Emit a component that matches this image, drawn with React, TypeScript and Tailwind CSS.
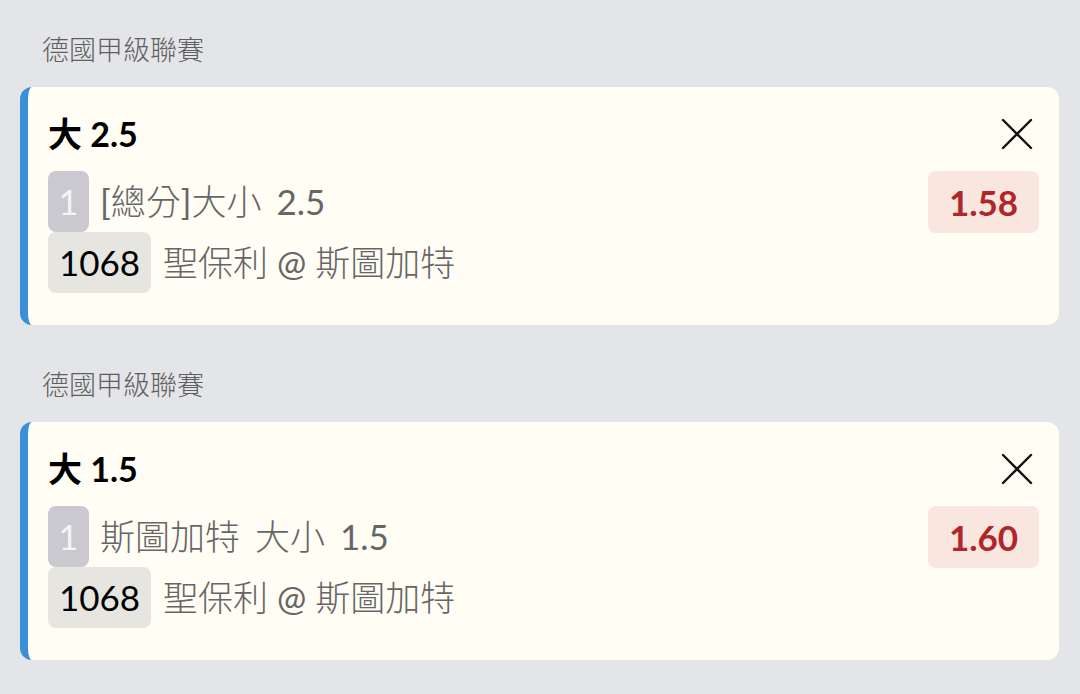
const bets = [
  { league: "德國甲級聯賽", title: "大 2.5", market: "[總分]大小 2.5", odds: "1.58", code: "1068", match: "聖保利 @ 斯圖加特" },
  { league: "德國甲級聯賽", title: "大 1.5", market: "斯圖加特 大小 1.5", odds: "1.60", code: "1068", match: "聖保利 @ 斯圖加特" },
];

// CJK runs use the light weight, latin runs stay regular
function Mixed({ text }: { text: string }) {
  const parts = text.match(/[\u3400-\u9fff]+|[^\u3400-\u9fff]+/g) ?? [];
  return (
    <>
      {parts.map((p, i) =>
        /[\u3400-\u9fff]/.test(p) ? (
          <span key={i} className="font-light">{p}</span>
        ) : (
          <span key={i}>{p}</span>
        ),
      )}
    </>
  );
}

function CloseIcon() {
  return (
    <svg width="34" height="34" viewBox="0 0 34 34" fill="none" stroke="#111" strokeWidth="2.4" strokeLinecap="round">
      <path d="M3 3 L31 31 M31 3 L3 31" />
    </svg>
  );
}

function BetCard({ bet }: { bet: (typeof bets)[number] }) {
  return (
    <div className="ml-5 mr-[21px] mb-[10px] rounded-xl border-l-[8px] border-[#3a8fd6] bg-[#fffdf4] pl-5 pr-5 pt-[25px] pb-[32px]">
      <div className="flex h-[44px] items-center justify-between">
        <div className="text-[34px] font-bold leading-[44px] text-black">{bet.title}</div>
        <div className="mr-[5px]">
          <CloseIcon />
        </div>
      </div>
      <div className="mt-[15px] flex items-start justify-between">
        <div className="flex flex-col">
          <div className="flex h-[61px] items-center">
            <span className="flex h-[61px] w-[41px] items-center justify-center rounded-lg bg-[#c9c9cf] text-[35px] text-[#f4f4f6]">1</span>
            <span className="ml-[11px] text-[35px] text-[#666] [word-spacing:6px]">
              <Mixed text={bet.market} />
            </span>
          </div>
          <div className="flex h-[61px] items-center">
            <span className="flex h-[61px] w-[103px] items-center justify-center rounded-lg bg-[#e7e5e0] text-[35px] text-black">{bet.code}</span>
            <span className="ml-[12px] text-[35px] text-[#666]">
              <Mixed text={bet.match} />
            </span>
          </div>
        </div>
        <div className="flex h-[62px] w-[111px] items-center justify-center rounded-lg bg-[#f8e6df] text-[35px] font-bold text-[#b0262a]">
          {bet.odds}
        </div>
      </div>
    </div>
  );
}

export default function App() {
  return (
    <div
      className="min-h-[694px] w-[1080px] bg-[#e4e5e8]"
      style={{ fontFamily: 'Lato, "Noto Sans CJK TC", "Noto Sans", sans-serif' }}
    >
      {bets.map((bet, i) => (
        <div key={i}>
          <div className="pl-[42px] pt-[34px] pb-[21px] text-[27px] font-light leading-[32px] text-[#5f5f5f]">
            {bet.league}
          </div>
          <BetCard bet={bet} />
        </div>
      ))}
    </div>
  );
}
